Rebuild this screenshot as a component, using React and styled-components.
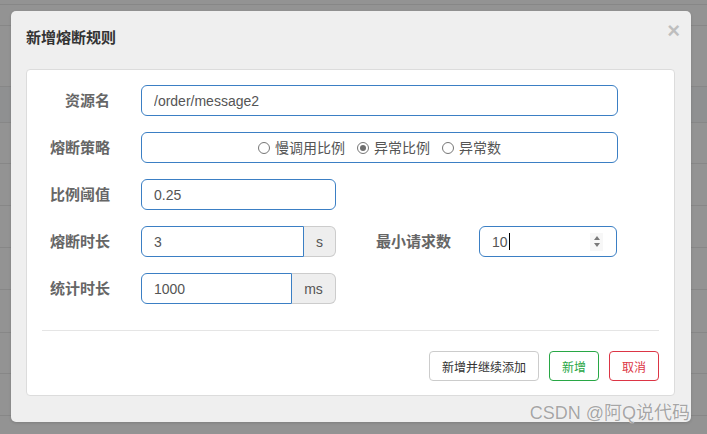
import React from 'react'
import styled, { createGlobalStyle } from 'styled-components';

const GlobalStyle = createGlobalStyle`
html, body {
  margin: 0;
  padding: 0;
  background: #939393;
}
body {
  font-family: "Liberation Sans", "Noto Sans CJK SC", sans-serif;
  overflow: hidden;
}
`

export const Page = styled.div`
position: relative;
width: 707px;
height: 434px;
background: #939393;
`

export const BgRow = styled.div`
height: ${p => p.h}px;
border-bottom: 1px solid #878787;
box-sizing: border-box;
background: ${p => p.hl ? '#8f9091' : 'transparent'};
`

export const Modal = styled.div`
position: absolute;
top: 11px;
left: 11px;
width: 680px;
box-sizing: border-box;
background: #efefef;
border-radius: 5px;
padding: 0 16px 26px 15px;
box-shadow: 0 1px 3px rgba(0,0,0,0.15);
`

export const Header = styled.div`
height: 58px;
display: flex;
justify-content: space-between;
align-items: flex-start;
padding-top: 17px;
box-sizing: border-box;
`

export const Title = styled.h4`
margin: 0;
font-size: 15px;
line-height: 20px;
font-weight: bold;
color: #333;
`

export const Close = styled.span`
margin-top: -8px;
margin-right: -5px;
font-size: 22px;
font-weight: bold;
line-height: 22px;
color: #000;
opacity: 0.2;
`

export const Panel = styled.div`
background: #fff;
border: 1px solid #dcdcdc;
border-radius: 4px;
padding: 15px 0 14px;
`

export const Row = styled.div`
display: flex;
align-items: center;
height: 31px;
margin-bottom: ${p => p.last ? 0 : 16}px;
`

export const Label = styled.label`
width: ${p => p.w || 83}px;
margin-right: ${p => p.gap || 31}px;
text-align: right;
font-size: 15px;
line-height: 20px;
font-weight: bold;
color: #666;
flex-shrink: 0;
`

export const Input = styled.input`
width: ${p => p.w}px;
height: 31px;
box-sizing: border-box;
border: 1px solid #3b7fc4;
border-radius: ${p => p.grouped ? '6px 0 0 6px' : '6px'};
padding: 0 12px;
font-family: "Liberation Sans", sans-serif;
font-size: 14px;
color: #555;
background: #fff;
outline: none;
`

export const Group = styled.div`
display: flex;
width: 195px;
`

export const Addon = styled.span`
width: ${p => p.w}px;
height: 31px;
box-sizing: border-box;
display: flex;
align-items: center;
justify-content: center;
background: #eee;
border: 1px solid #ccc;
border-left: none;
border-radius: 0 6px 6px 0;
font-size: 14px;
color: #555;
`

export const RadioBox = styled.div`
width: 477px;
height: 31px;
box-sizing: border-box;
border: 1px solid #3b7fc4;
border-radius: 6px;
display: flex;
align-items: center;
justify-content: center;
gap: 12px;
`

export const RadioItem = styled.label`
display: flex;
align-items: center;
gap: 5px;
font-size: 14px;
line-height: 18px;
color: #555;
`

export const Dot = styled.span`
width: 12px;
height: 12px;
box-sizing: border-box;
border-radius: 50%;
border: 1px solid #767676;
background: #fff;
display: flex;
align-items: center;
justify-content: center;
&::after {
  content: '';
  width: 6px;
  height: 6px;
  border-radius: 50%;
  background: ${p => p.on ? '#6e6e6e' : 'transparent'};
}
`

export const NumberBox = styled.div`
width: 138px;
height: 31px;
box-sizing: border-box;
border: 1px solid #3b7fc4;
border-radius: 6px;
padding: 0 13px 0 12px;
display: flex;
align-items: center;
font-size: 14px;
color: #555;
`

export const Caret = styled.span`
width: 1px;
height: 17px;
background: #000;
margin-left: 1px;
`

export const Spinner = styled.span`
margin-left: auto;
width: 13px;
height: 18px;
background: #f7f7f7;
display: flex;
flex-direction: column;
align-items: center;
justify-content: center;
gap: 3px;
`

export const Tri = styled.span`
width: 0;
height: 0;
border-left: 3.5px solid transparent;
border-right: 3.5px solid transparent;
${p => p.down ? 'border-top: 4px solid #7a7a7a;' : 'border-bottom: 4px solid #7a7a7a;'}
`

export const Divider = styled.hr`
margin: 26px 15px 20px;
border: none;
border-top: 1px solid #e5e5e5;
`

export const Footer = styled.div`
display: flex;
justify-content: flex-end;
gap: 10px;
padding-right: 15px;
`

export const Button = styled.button`
height: 30px;
padding: 0 12px;
border-radius: 4px;
background: #fff;
font-family: "Liberation Sans", "Noto Sans CJK SC", sans-serif;
font-size: 12px;
border: 1px solid ${p => p.color || '#ccc'};
color: ${p => p.color || '#333'};
`

export const Watermark = styled.div`
position: absolute;
right: 17px;
bottom: 10px;
font-size: 18px;
line-height: 22px;
color: #a6a6a6;
text-shadow: 0 0 1px #fff, 0 0 1px #fff;
`

const bgRows = [
    { h: 5 }, { h: 21 }, { h: 61 }, { h: 36, hl: true },
    { h: 41 }, { h: 42 }, { h: 42 }, { h: 42 }, { h: 43 }, { h: 41 }, { h: 42 },
]

const App = () => {
    return (
        <>
        <GlobalStyle />
        <Page>
            {bgRows.map((r, i) => <BgRow key={i} h={r.h} hl={r.hl} />)}

            <Modal>
                <Header>
                    <Title>新增熔断规则</Title>
                    <Close>×</Close>
                </Header>
                <Panel>
                    <Row>
                        <Label>资源名</Label>
                        <Input w={477} readOnly value="/order/message2" />
                    </Row>
                    <Row>
                        <Label>熔断策略</Label>
                        <RadioBox>
                            <RadioItem><Dot />慢调用比例</RadioItem>
                            <RadioItem><Dot on />异常比例</RadioItem>
                            <RadioItem><Dot />异常数</RadioItem>
                        </RadioBox>
                    </Row>
                    <Row>
                        <Label>比例阈值</Label>
                        <Input w={195} readOnly value="0.25" />
                    </Row>
                    <Row>
                        <Label>熔断时长</Label>
                        <Group>
                            <Input w={163} grouped readOnly value="3" />
                            <Addon w={32}>s</Addon>
                        </Group>
                        <Label w={115} gap={28}>最小请求数</Label>
                        <NumberBox>
                            10<Caret />
                            <Spinner><Tri /><Tri down /></Spinner>
                        </NumberBox>
                    </Row>
                    <Row last>
                        <Label>统计时长</Label>
                        <Group>
                            <Input w={151} grouped readOnly value="1000" />
                            <Addon w={44}>ms</Addon>
                        </Group>
                    </Row>
                    <Divider />
                    <Footer>
                        <Button>新增并继续添加</Button>
                        <Button color="#28a745">新增</Button>
                        <Button color="#dc3545">取消</Button>
                    </Footer>
                </Panel>
            </Modal>

            <Watermark>CSDN @阿Q说代码</Watermark>
        </Page>
        </>
    )
}

export default App
